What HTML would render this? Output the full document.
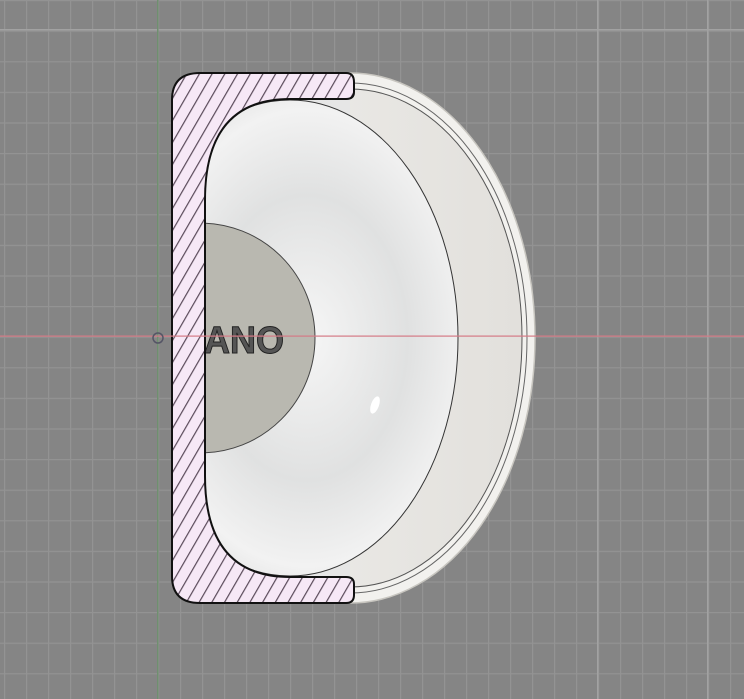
<!DOCTYPE html>
<html><head><style>
html,body{margin:0;padding:0;width:744px;height:699px;overflow:hidden;background:#858585}
svg{display:block}
</style></head><body>
<svg width="744" height="699" viewBox="0 0 744 699" xmlns="http://www.w3.org/2000/svg">
<defs>
<pattern id="minor" x="4" y="0" width="22" height="30.6" patternUnits="userSpaceOnUse">
<rect x="0" y="0" width="1.2" height="30.6" fill="#939393"/>
<rect x="0" y="0" width="22" height="1.2" fill="#939393"/>
</pattern>
<pattern id="hatch" width="11" height="11" patternUnits="userSpaceOnUse" patternTransform="rotate(30)">
<rect width="11" height="11" fill="#f6e8f6"/>
<rect x="0" y="0" width="1.2" height="11" fill="#5a4a5a"/>
</pattern>
<radialGradient id="bulb" cx="0.55" cy="0.5" r="0.6">
<stop offset="0" stop-color="#f6f6f6"/>
<stop offset="0.5" stop-color="#e0e1e1"/>
<stop offset="0.8" stop-color="#f2f2f2"/>
<stop offset="1" stop-color="#dcdcdc"/>
</radialGradient>
<linearGradient id="rim" x1="0" y1="0" x2="1" y2="0">
<stop offset="0" stop-color="#f0efec"/>
<stop offset="1" stop-color="#e2e0dc"/>
</linearGradient>
<clipPath id="rightof"><rect x="345" y="0" width="400" height="699"/></clipPath>
<clipPath id="inner"><rect x="204" y="90" width="300" height="500"/></clipPath>
</defs>
<rect width="744" height="699" fill="#858585"/>
<rect width="744" height="699" fill="url(#minor)"/>
<g fill="#a2a2a2">
<rect x="597" y="0" width="1.5" height="699"/><rect x="707" y="0" width="1.5" height="699"/>
<rect x="0" y="29" width="744" height="1.5"/>
</g>
<rect x="157" y="0" width="1.5" height="699" fill="#6f8f6f"/>
<g clip-path="url(#rightof)">
<ellipse cx="350" cy="338" rx="185" ry="265" fill="#f2f1ee" stroke="#c8c6c0" stroke-width="1.5"/>
<ellipse cx="350" cy="338" rx="177" ry="255" fill="none" stroke="#666" stroke-width="1"/>
<ellipse cx="350" cy="338" rx="172" ry="249" fill="url(#rim)" stroke="#555" stroke-width="1"/>
</g>
<g clip-path="url(#inner)">
<rect x="200" y="95" width="150" height="486" fill="#e6e6e6"/>
<ellipse cx="290" cy="338" rx="168" ry="238" fill="url(#bulb)" stroke="#333" stroke-width="1"/>
<circle cx="200" cy="338" r="115" fill="#b9b8b0" stroke="#444" stroke-width="1"/>
<text x="178" y="353" font-family="Liberation Sans, sans-serif" font-weight="bold" font-size="38" fill="#555" stroke="#222" stroke-width="1" textLength="106" lengthAdjust="spacingAndGlyphs">NANO</text>
</g>
<path d="M172 100 Q172 73 200 73 L346 73 Q354 73 354 82 L354 92 Q354 99 346 99 L290 99 Q205 99 205 200 L205 476 Q205 577 290 577 L346 577 Q354 577 354 584 L354 595 Q354 603 346 603 L200 603 Q172 603 172 576 Z" fill="url(#hatch)" stroke="#111" stroke-width="2"/>
<rect x="0" y="335.5" width="744" height="1.2" fill="#d57a86"/>
<circle cx="158" cy="338" r="5" fill="none" stroke="#556" stroke-width="1.5"/>
<ellipse cx="375" cy="405" rx="4" ry="9" fill="#fff" transform="rotate(20 375 405)"/>
</svg>
</body></html>
